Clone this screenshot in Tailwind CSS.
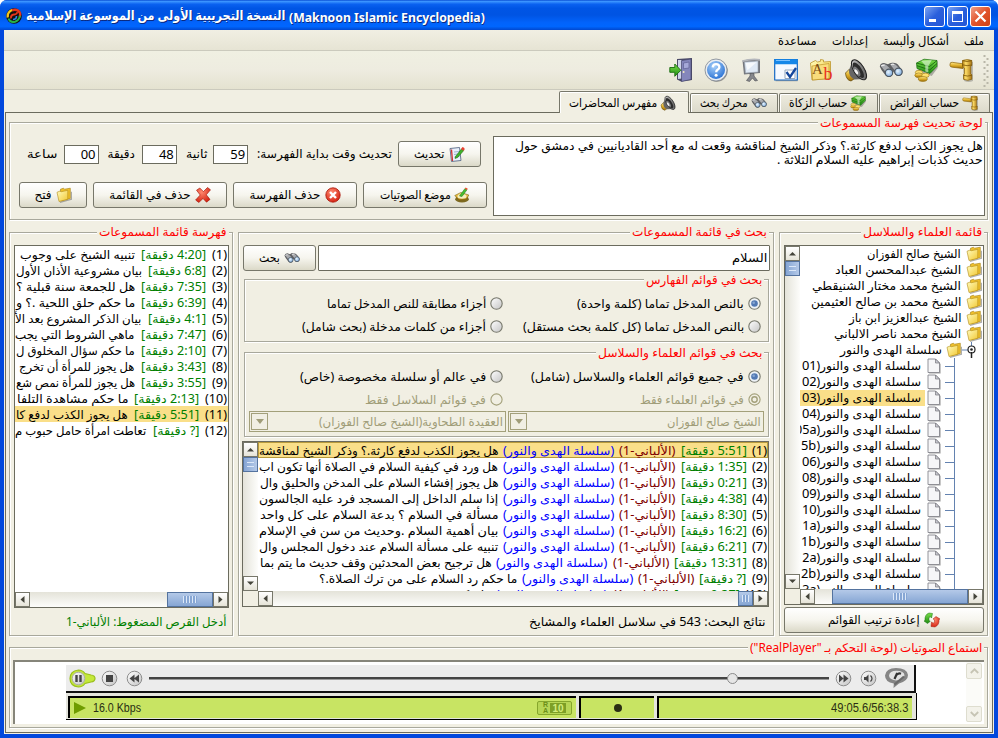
<!DOCTYPE html>
<html lang="ar">
<head>
<meta charset="utf-8">
<title>Maknoon Islamic Encyclopedia</title>
<script src="https://cdn.jsdelivr.net/npm/@tailwindcss/browser@4"></script>
</head>
<body class="w-[998px] h-[738px] overflow-hidden bg-white font-['Noto_Sans','DejaVu_Sans',sans-serif] text-[12px] leading-4 text-black">

<svg class="absolute w-0 h-0" width="0" height="0" xmlns="http://www.w3.org/2000/svg">
  <defs>
    <linearGradient id="gold" x1="0" y1="0" x2="0" y2="1"><stop offset="0" stop-color="#ffe98a"/><stop offset=".5" stop-color="#e0b02c"/><stop offset="1" stop-color="#9a6c08"/></linearGradient>
    <linearGradient id="goldH" x1="0" y1="0" x2="1" y2="0"><stop offset="0" stop-color="#b07c10"/><stop offset=".35" stop-color="#ffdf6a"/><stop offset="1" stop-color="#a87410"/></linearGradient>
    <linearGradient id="fold" x1="0" y1="0" x2="1" y2="1"><stop offset="0" stop-color="#fffcc0"/><stop offset="1" stop-color="#f2c832"/></linearGradient>
    <linearGradient id="grn" x1="0" y1="0" x2="0" y2="1"><stop offset="0" stop-color="#7be04a"/><stop offset="1" stop-color="#1f8a12"/></linearGradient>
    <linearGradient id="steel" x1="0" y1="0" x2="1" y2="1"><stop offset="0" stop-color="#e4e4e4"/><stop offset="1" stop-color="#4a4a4a"/></linearGradient>
    <radialGradient id="blu" cx=".4" cy=".3" r=".8"><stop offset="0" stop-color="#a8d0fa"/><stop offset="1" stop-color="#1f6ad0"/></radialGradient>
    <radialGradient id="lens" cx=".4" cy=".4" r=".7"><stop offset="0" stop-color="#eaf6ff"/><stop offset="1" stop-color="#6d9fd6"/></radialGradient>
    <radialGradient id="redg" cx=".4" cy=".3" r=".8"><stop offset="0" stop-color="#ff8a70"/><stop offset="1" stop-color="#d01808"/></radialGradient>
    <linearGradient id="ring" x1="0" y1="0" x2="1" y2="1"><stop offset="0" stop-color="#fff"/><stop offset="1" stop-color="#c4c4c4"/></linearGradient>
  </defs>
  <symbol id="gavel" viewBox="0 0 24 24">
    <path d="M13.500 3h10v19q-4.500 2-9 0z" fill="#444" opacity=".3" transform="translate(.6 1)"/>
    <path d="M1 6.300q0-2.300 2.200-2L14 5.800v4.700L3.200 9.200Q1 9 1 7.500z" fill="url(#gold)" stroke="#8a6208" stroke-width=".7"/>
    <path d="M13.500 2.500q4.700-1.800 9.300 0v5l-1 .8v7.500l1 1v4.500q-4 2-8.300 0v-4.500l.8-1V10l-1.800-1.700z" fill="url(#goldH)" stroke="#7c5706" stroke-width=".7"/>
    <path d="M13.500 6.800q4.500 1.700 9.300.2M14.500 17.300q4 1.500 8.300 0M13.500 2.700q4.500 1.600 9.300 0" fill="none" stroke="#7a5405" stroke-width=".8"/>
  </symbol>
  <symbol id="money" viewBox="0 0 24 24">
    <path d="M3 5l8-3.500 12 1V9l-6 8L4 12z" fill="#333" opacity=".35" transform="translate(.7 1)"/>
    <path d="M2.500 5L10 1.200l13 1.300v5.800L16 15.500 3 10.500z" fill="url(#grn)" stroke="#146a0c" stroke-width=".7"/>
    <path d="M2.500 5L15.500 8.500 23 2.500M3 7.700l12.700 4.300L23 5.500" fill="none" stroke="#125f0a" stroke-width=".8"/>
    <path d="M7 2.800l4.300 4.700v6l3 1V8.200l3.500-6.200z" fill="#f4fbf0" opacity=".55"/>
    <ellipse cx="5" cy="14.500" rx="3.700" ry="2.200" fill="#ffe070" stroke="#94700c" stroke-width=".6"/>
    <ellipse cx="4.800" cy="17.300" rx="4" ry="2.300" fill="url(#gold)" stroke="#94700c" stroke-width=".6"/>
    <ellipse cx="11.500" cy="17.300" rx="3.700" ry="2.200" fill="#ffe070" stroke="#94700c" stroke-width=".6"/>
    <ellipse cx="8.800" cy="21" rx="4.500" ry="2.400" fill="url(#gold)" stroke="#94700c" stroke-width=".6"/>
  </symbol>
  <symbol id="binoc" viewBox="0 0 24 24">
    <path d="M.8 8.500Q1 5.300 5 5l4 1.300q2-1.800 4.500-1.600Q18 4.500 20 8l3.200 4.500q.8 4.500-3 5.500-3.500.3-4.700-3l-1.500-1.500-1 4q-3 3-6.200.3L2.500 12z" fill="#5f6063"/>
    <path d="M1.500 7.500q2.500-2 5.500-.8L11.500 11 7 14.500zM11 6.300q3-1.300 5.500.2L20.500 10.500 15.500 12z" fill="#a9abaf"/>
    <path d="M2.200 8q2-1.200 3.500-.8M12 6.500q2-.7 3.300 0" stroke="#eee" stroke-width="1.200" fill="none"/>
    <circle cx="10" cy="14.800" r="3.700" fill="url(#lens)" stroke="#4c5660" stroke-width="1.100"/>
    <circle cx="19.500" cy="13.800" r="3.700" fill="url(#lens)" stroke="#4c5660" stroke-width="1.100"/>
  </symbol>
  <symbol id="spk" viewBox="0 0 24 24">
    <path d="M1.500 15l4-4 6 9-4.500 3q-5-1-5.500-8z" fill="url(#gold)" stroke="#5d4304" stroke-width=".7"/>
    <path d="M5 12L8.500 3q8 3 12 18l-10 .5q-6-3-5.500-9.500z" fill="#666"/>
    <ellipse cx="15" cy="11.800" rx="5.200" ry="11.400" transform="rotate(-33 15 11.800)" fill="url(#steel)" stroke="#222" stroke-width="1"/>
    <ellipse cx="14.300" cy="12.300" rx="3.500" ry="9" transform="rotate(-33 14.300 12.300)" fill="#2c2c2c"/>
    <ellipse cx="13" cy="13.300" rx="2.200" ry="5.500" transform="rotate(-33 13 13.300)" fill="#77787a"/>
    <ellipse cx="12.300" cy="13.800" rx="1.300" ry="3" transform="rotate(-33 12.300 13.800)" fill="#f2f2f2"/>
  </symbol>
  <symbol id="folder" viewBox="0 0 16 16">
    <path d="M3.500 14.500L15 11.500V4" fill="none" stroke="#777" stroke-width="1.200" opacity=".6" transform="translate(.4 .8)"/>
    <path d="M4.500 2.200l3-1 1 1 5.800-1v10.300L4.500 14z" fill="#eebf2c" stroke="#a37c0c" stroke-width=".6"/>
    <path d="M1 5.300l3-1.300 1 .8L11.800 3.300v9L3 14.500z" fill="url(#fold)" stroke="#b08a14" stroke-width=".6"/>
  </symbol>
  <symbol id="file" viewBox="0 0 16 16">
    <path d="M2.500 1.500h7.500l4 4v9.500h-11.500z" fill="#444" opacity=".5" transform="translate(.6 .6)"/>
    <path d="M2 1h7.500L13.500 5v9.500H2z" fill="#f6f6f8" stroke="#88888e" stroke-width=".9"/>
    <path d="M9.500 1v4h4z" fill="#c9c9d2" stroke="#77777c" stroke-width=".7"/>
  </symbol>
  <symbol id="edit" viewBox="0 0 16 16">
    <path d="M1 2.500l9.500-1L12 14.500 2.500 15.500z" fill="#e8f0fb" stroke="#5a6b88" stroke-width=".9"/>
    <path d="M2.500 3.500l1 11.500" stroke="#d03030" stroke-width="1.300"/><path d="M5 6l5-.5M5 8.500l4-.5M5.500 11l5-.5" stroke="#8fa6c8" stroke-width=".8"/>
    <path d="M6.500 10.500L12.500 3l2.200 1.600-6.200 7-2.500.8z" fill="#3eb428" stroke="#16660c" stroke-width=".6"/><path d="M12 3l1.500-2q2 .2 2.300 2.200l-1.500 1.500z" fill="#e84030"/>
  </symbol>
  <symbol id="place" viewBox="0 0 16 16">
    <ellipse cx="8" cy="12.200" rx="6.800" ry="3.300" fill="#7d6a20"/><path d="M.8 8.500l6-3 8 2.500-2.500 4.500-7 .8z" fill="url(#gold)" stroke="#7a6110" stroke-width=".6"/><ellipse cx="8" cy="9.500" rx="4.500" ry="2.200" fill="#f5efc0"/>
    <path d="M5.500 9L11 1.500l2 1.300L8 9.500z" fill="#45c030" stroke="#1b6d10" stroke-width=".5"/><path d="M10.800 1.700l.8-1.200 2.200 1.200-.8 1.200z" fill="#f05030"/>
  </symbol>
  <symbol id="stopx" viewBox="0 0 16 16"><circle cx="8" cy="8" r="7.200" fill="url(#redg)" stroke="#a81408" stroke-width=".8"/><path d="M5 5l6 6M11 5l-6 6" stroke="#fff" stroke-width="2.400"/></symbol>
  <symbol id="bigx" viewBox="0 0 16 16"><path d="M1.500 3.200L4.800 1l3.600 3.600L12.500.5 15.500 2.800l-4.200 5 3.700 4.600L11.500 15.200 8 11.500l-4.200 4L.6 13l4.600-5z" fill="url(#redg)" stroke="#9c1005" stroke-width=".6"/></symbol>
  <symbol id="cycle" viewBox="0 0 16 16">
    <path d="M1 8.500Q.5 2.500 5 1l3.500.5L7.500 6 6 4.500Q4.500 5.500 5 8.500l1.300.8L3.500 11.500 0 9z" fill="url(#grn)" stroke="#15700d" stroke-width=".5"/>
    <path d="M15 7.500q.5 5.500-4 7.500l-4-.5L7.500 10l1.800 1.300q1.700-1 1.200-3.500L9 7l3-2.500L16 7z" fill="url(#redg)" stroke="#a02010" stroke-width=".5"/>
  </symbol>
  <symbol id="radio" viewBox="0 0 13 13"><circle cx="6.500" cy="6.500" r="5.700" fill="url(#ring)" stroke="#77786c" stroke-width="1.100"/></symbol>
  <symbol id="radioOn" viewBox="0 0 13 13"><circle cx="6.500" cy="6.500" r="5.700" fill="#eef2f6" stroke="#77786c" stroke-width="1.100"/><circle cx="6.500" cy="6.500" r="3.300" fill="#5279b4"/><circle cx="5.700" cy="5.700" r="1.300" fill="#86a6d2"/></symbol>
  <symbol id="radioOff" viewBox="0 0 13 13"><circle cx="6.500" cy="6.500" r="5.600" fill="none" stroke="#a3a07a" stroke-width="1.100"/></symbol>
  <symbol id="radioOffOn" viewBox="0 0 13 13"><circle cx="6.500" cy="6.500" r="5.600" fill="none" stroke="#a3a07a" stroke-width="1.100"/><circle cx="6.500" cy="6.500" r="2.700" fill="none" stroke="#a3a07a" stroke-width="1.400"/></symbol>
</svg>

<div class="w-[998px] h-[738px] flex flex-col rounded-t-[7px] overflow-hidden bg-[#0148dd]">
  <!-- Title bar -->
  <header class="h-[30px] shrink-0 flex items-center pl-[6px] pr-[7px] bg-[linear-gradient(#0a4fd4_0,#3a93ff_5%,#0a61f0_14%,#0055e5_28%,#0054e3_50%,#0263fb_75%,#0066ff_88%,#0148cf_100%)]">
    <svg class="w-4 h-4 mr-1 mt-0.5" viewBox="0 0 16 16"><circle cx="8" cy="8" r="7.800" fill="#111"/><path d="M1.800 9.500Q1 4 6.500 1.800" fill="none" stroke="#f5c518" stroke-width="2.300"/><path d="M6 2.300q5-1.800 7.700 2.200 1 2.500-.3 4.500" fill="none" stroke="#e8351c" stroke-width="2.300"/><path d="M2.500 10.500q1.500 4.500 6.500 3.300 4-1.300 5-6" fill="none" stroke="#27b048" stroke-width="2"/><path d="M5 10.500Q4.500 7 8 6.500T11 4" fill="none" stroke="#e8351c" stroke-width="1.800"/><path d="M7 11.500q3.500 0 3.500-3.500" fill="none" stroke="#2d84e8" stroke-width="1.600"/></svg>
    <div class="flex items-center gap-1 font-bold text-white text-[13px] [text-shadow:1px_1px_0_#0b2a80]">
      <span dir="rtl" data-w="259">النسخة التجريبية الأولى من الموسوعة الإسلامية</span>
      <span class="pt-[3px]" data-w="196">(Maknoon Islamic Encyclopedia)</span>
    </div>
    <div class="ml-auto flex gap-[2px] pt-[3px]">
      <div class="w-[21px] h-[21px] rounded-[3px] border border-white bg-[linear-gradient(135deg,#7ba4f2,#2a5fdc_50%,#2456d6)] flex items-end pl-1 pb-1"><div class="w-[7px] h-[3px] bg-white"></div></div>
      <div class="w-[21px] h-[21px] rounded-[3px] border border-white bg-[linear-gradient(135deg,#7ba4f2,#2a5fdc_50%,#2456d6)] flex items-center justify-center"><div class="w-[11px] h-[11px] border border-t-[3px] border-white"></div></div>
      <div class="w-[21px] h-[21px] rounded-[3px] border border-white bg-[linear-gradient(135deg,#f0a088,#e2532c_50%,#cf4215)] flex items-center justify-center"><svg class="w-[13px] h-[13px]" viewBox="0 0 13 13"><path d="M1.500 1.500l10 10M11.500 1.500l-10 10" stroke="#fff" stroke-width="2.200"/></svg></div>
    </div>
  </header>

  <div dir="rtl" class="h-[704px] mx-1 bg-[#f1efe3] flex flex-col">
    <!-- Menu -->
    <nav class="h-[21px] shrink-0 border-b border-[#cbcabd] bg-[linear-gradient(#f1efe3,#e6e4d4)] flex items-center pr-[10px] pt-[2px]">
      <span data-w="20">ملف</span><span class="w-[15px]"></span><span data-w="66">أشكال وألبسة</span><span class="w-[15px]"></span><span data-w="36">إعدادات</span><span class="w-[15px]"></span><span data-w="39">مساعدة</span>
    </nav>
    <!-- Toolbar -->
    <div class="h-[39px] shrink-0 border-b border-[#cbcabd] bg-[linear-gradient(#f0f0e2,#eeece0_50%,#e4e2d0)] flex items-center pr-[5px] gap-[11px]">
      <svg class="w-[6px] h-[34px] -ml-[1px]" viewBox="0 0 6 34"><path d="M1.500 2v32" stroke="#b9b7a8" stroke-width="2" stroke-dasharray="2 4"/><path d="M4.500 5v28" stroke="#b9b7a8" stroke-width="2" stroke-dasharray="2 4"/></svg>
      <svg class="w-6 h-6"><use href="#gavel"/></svg>
      <svg class="w-6 h-6"><use href="#money"/></svg>
      <svg class="w-6 h-6"><use href="#binoc"/></svg>
      <svg class="w-6 h-6"><use href="#spk"/></svg>
      <svg class="w-6 h-6" viewBox="0 0 24 24"><path d="M1.500 5l5-2.500L8.500 4l3-.7V1.500l3 .5v2l7-.5v17L3 22z" fill="url(#fold)" stroke="#b58a1c" stroke-width=".7"/><path d="M3 8l17-2.500v15L3.500 22z" fill="#f8dc7c" stroke="#b58a1c" stroke-width=".6"/><text x="3" y="16" direction="ltr" font-family="Liberation Serif" font-size="15" fill="#7a4a12">A</text><text x="14.500" y="21.500" direction="ltr" font-family="Liberation Serif" font-size="18" fill="#e83020">b</text></svg>
      <svg class="w-6 h-6" viewBox="0 0 24 24"><path d="M1 2h22v20.500H1z" fill="#444" opacity=".4" transform="translate(.6 .8)"/><path d="M.7 1.500h22.600v20.500H.7z" fill="#f5f9ff" stroke="#1267c4" stroke-width="1.200"/><path d="M.5 1.300h23v5H.5z" fill="#1587e8"/><path d="M2 2.500h14" stroke="#7cc2ff"/><path d="M11 12h10v8.500H11z" fill="#fff" stroke="#93a6bb"/><path d="M12.500 14l3.500 5L22 10" fill="none" stroke="#14479c" stroke-width="2.300"/></svg>
      <svg class="w-6 h-6" viewBox="0 0 24 24"><path d="M3.500 2.500q9-2 17.500-1v13.500l-16 1.500z" fill="#74777d"/><path d="M5.500 4l13.500-1v11l-12.500 1z" fill="#dfe9f5" stroke="#9aa4b0" stroke-width=".6"/><path d="M6.500 5l11-.8-9 8z" fill="#fff" opacity=".7"/><path d="M3.500 3.200Q12 .6 21 1.800" stroke="#b4b7bc" stroke-width="1.800" fill="none"/><path d="M11 15.500h4v2.500l3.500 4.500-2.500.5-2.500-3-3 3.500-3-1 3.500-4.500z" fill="#85878c" stroke="#4b4d52" stroke-width=".6"/></svg>
      <svg class="w-6 h-6" viewBox="0 0 24 24"><circle cx="12.700" cy="12.800" r="11" fill="#555" opacity=".6"/><circle cx="12" cy="12" r="11" fill="#e9edf2" stroke="#7b848f" stroke-width=".8"/><circle cx="12" cy="12" r="9" fill="url(#blu)"/><path d="M8.700 9.300q.3-3.200 3.400-3.200t3.300 2.900q0 1.500-1.600 2.600-1.600 1-1.600 2.700" fill="none" stroke="#fff" stroke-width="2.300"/><circle cx="12.100" cy="17.300" r="1.500" fill="#fff"/></svg>
      <svg class="w-6 h-6" viewBox="0 0 24 24"><path d="M8 1l15-1v22l-11 1.500-4-2z" fill="#4c4b68"/><path d="M9 2h4v18.500l-4 .5z" fill="#cfd3ea"/><path d="M12.500 2.500L22 1v20.500l-9.500 2z" fill="#8486bb" stroke="#45466c" stroke-width=".7"/><path d="M14.500 5l5.500-1v6l-5.500.8z" fill="#a5a8d8" stroke="#5e6094" stroke-width=".7"/><circle cx="14.600" cy="14" r="1" fill="#f1e9c0"/><path d="M.8 9.500h5V6l6 6.300-6 6v-4h-5z" fill="url(#grn)" stroke="#176b0d" stroke-width=".9"/></svg>
    </div>
    <!-- Tabs -->
    <div class="h-[22px] shrink-0 flex items-end pr-1 gap-[1px]">
      <div class="w-[111px] h-[19px] border border-b-0 border-[#77776a] rounded-t-[2px] bg-[linear-gradient(#eeecdf,#dcdacb)] flex items-center pr-[11px] gap-[3px] shadow-[inset_1px_1px_0_#fff]"><svg class="w-4 h-4"><use href="#gavel"/></svg><span data-w="69">حساب الفرائض</span></div>
      <div class="w-[99px] h-[19px] border border-b-0 border-[#77776a] rounded-t-[2px] bg-[linear-gradient(#eeecdf,#dcdacb)] flex items-center pr-[11px] gap-[3px] shadow-[inset_1px_1px_0_#fff]"><svg class="w-4 h-4"><use href="#money"/></svg><span data-w="58">حساب الزكاة</span></div>
      <div class="w-[88px] h-[19px] border border-b-0 border-[#77776a] rounded-t-[2px] bg-[linear-gradient(#eeecdf,#dcdacb)] flex items-center pr-[10px] gap-[3px] shadow-[inset_1px_1px_0_#fff]"><svg class="w-4 h-4"><use href="#binoc"/></svg><span data-w="48">محرك بحث</span></div>
      <div class="relative z-10 w-[130px] h-[22px] -mb-px border border-b-0 border-[#77776a] rounded-t-[2px] bg-[#f1efe3] flex items-center pr-[12px] gap-[3px] shadow-[inset_1px_1px_0_#fff]"><svg class="w-4 h-4"><use href="#spk"/></svg><span data-w="88">مفهرس المحاضرات</span></div>
    </div>

    <main class="h-[621px] mx-[1px] border border-[#6b6b5e] pt-[9px] pr-[4px] pl-[3px] flex flex-col">
      <!-- Index editing -->
      <section class="relative h-[98px] shrink-0 border border-[#a8a89c] shadow-[inset_1px_1px_0_#fff,1px_1px_0_#fff] flex pt-[13px] pr-[2px]">
        <h2 class="absolute -top-[8px] right-[2px] px-[2px] bg-[#f1efe3] text-[#f00] leading-4"><span data-w="163">لوحة تحديث فهرسة المسموعات</span></h2>
        <div class="w-[492px] h-[80px] border-[1.500px] border-[#6b6b5e] bg-white pr-[1px] pt-[1px] leading-[15px] flex flex-col items-start">
          <span data-w="468">هل يجوز الكذب لدفع كارثة.؟ وذكر الشيخ لمناقشة وقعت له مع أحد القاديانيين في دمشق حول</span>
          <span class="-mt-px" data-w="206">حديث كذبات إبراهيم عليه السلام الثلاثة .</span>
        </div>
        <div class="pt-[5px] pr-[6px] flex flex-col gap-[15px]">
          <div class="flex items-center h-[26px] pr-[6px]">
            <div class="w-[83px] h-[26px] rounded-[3px] border border-[#77776a] bg-[linear-gradient(#fff,#f6f5ee_50%,#dbd9c8)] flex items-center justify-center gap-[5px]"><svg class="w-4 h-4"><use href="#edit"/></svg><span data-w="31">تحديث</span></div>
            <span class="mr-[6px]" data-w="135">تحديث وقت بداية الفهرسة:</span>
            <div class="mr-[9px] w-[35px] h-[19px] border-[1.500px] border-[#6b6b5e] bg-white flex items-center justify-start pr-[2px] text-[13px]"><span data-w="15">59</span></div>
            <span class="mr-[6px]" data-w="21">ثانية</span>
            <div class="mr-[9px] w-[35px] h-[19px] border-[1.500px] border-[#6b6b5e] bg-white flex items-center justify-start pr-[2px] text-[13px]"><span data-w="15">48</span></div>
            <span class="mr-[7px]" data-w="27">دقيقة</span>
            <div class="mr-[9px] w-[35px] h-[19px] border-[1.500px] border-[#6b6b5e] bg-white flex items-center justify-start pr-[2px] text-[13px]"><span data-w="15">00</span></div>
            <span class="mr-[6px]" data-w="30">ساعة</span>
          </div>
          <div class="flex items-center h-[26px] gap-[6px]">
            <div class="w-[124px] h-[26px] rounded-[3px] border border-[#77776a] bg-[linear-gradient(#fff,#f6f5ee_50%,#dbd9c8)] flex items-center justify-center gap-[4px]"><svg class="w-4 h-4"><use href="#place"/></svg><span data-w="71">موضع الصوتيات</span></div>
            <div class="w-[124px] h-[26px] rounded-[3px] border border-[#77776a] bg-[linear-gradient(#fff,#f6f5ee_50%,#dbd9c8)] flex items-center justify-center gap-[4px]"><svg class="w-4 h-4"><use href="#stopx"/></svg><span data-w="71">حذف الفهرسة</span></div>
            <div class="w-[134px] h-[26px] rounded-[3px] border border-[#77776a] bg-[linear-gradient(#fff,#f6f5ee_50%,#dbd9c8)] flex items-center justify-center gap-[4px]"><svg class="w-4 h-4"><use href="#bigx"/></svg><span data-w="82">حذف في القائمة</span></div>
            <div class="w-[68px] h-[26px] rounded-[3px] border border-[#77776a] bg-[linear-gradient(#fff,#f6f5ee_50%,#dbd9c8)] flex items-center justify-center gap-[4px]"><svg class="w-4 h-4"><use href="#folder"/></svg><span data-w="17">فتح</span></div>
          </div>
        </div>
      </section>

      <div class="h-[404px] mt-[12px] shrink-0 flex">
        <!-- Scholars tree -->
        <section class="relative w-[209px] border border-[#a8a89c] shadow-[inset_1px_1px_0_#fff,1px_1px_0_#fff] pt-[12px] px-[3px] pl-[4px]">
          <h2 class="absolute -top-[9px] right-[3px] px-[2px] bg-[#f1efe3] text-[#f00]"><span data-w="119">قائمة العلماء والسلاسل</span></h2>
          <div class="w-[200px] h-[360px] border-[1.500px] border-[#6b6b5e] bg-[#f1efe3] grid grid-cols-[183px_15px] grid-rows-[343px_15px]">
            <div id="tree" class="relative bg-white overflow-hidden flex flex-col"></div>
            <div data-vbar="15"></div>
            <div data-hbar="136"></div>
          </div>
          <div class="mt-[2px] w-[200px] h-[26px] rounded-[3px] border border-[#77776a] bg-[linear-gradient(#fff,#f6f5ee_50%,#dbd9c8)] flex items-center justify-center gap-[4px]"><svg class="w-4 h-4"><use href="#cycle"/></svg><span data-w="92">إعادة ترتيب القوائم</span></div>
        </section>

        <!-- Search -->
        <section class="relative mr-[5px] w-[536px] border border-[#a8a89c] shadow-[inset_1px_1px_0_#fff,1px_1px_0_#fff] pt-[12px] pr-[3px] pl-[4px] flex flex-col">
          <h2 class="absolute -top-[9px] right-[4px] px-[2px] bg-[#f1efe3] text-[#f00]"><span data-w="135">بحث في قائمة المسموعات</span></h2>
          <div class="flex gap-[2px] h-[26px] shrink-0">
            <div class="w-[453px] border-[1.500px] border-[#6b6b5e] rounded-[1px] bg-white flex items-center pr-[2px]"><span data-w="35">السلام</span></div>
            <div class="w-[73px] rounded-[3px] border border-[#77776a] bg-[linear-gradient(#fff,#f6f5ee_50%,#dbd9c8)] flex items-center justify-center gap-[5px]"><svg class="w-4 h-4"><use href="#binoc"/></svg><span data-w="21">بحث</span></div>
          </div>
          <div class="relative mt-[8px] mr-[1px] w-[525px] h-[63px] shrink-0 border border-[#a8a89c] shadow-[inset_1px_1px_0_#fff,1px_1px_0_#fff] grid grid-cols-[258px_260px] auto-rows-[23px] pt-[12px] pr-[7px]">
            <h2 class="absolute -top-[8px] right-[4px] px-[2px] bg-[#f1efe3] text-[#f00]"><span data-w="116">بحث في قوائم الفهارس</span></h2>
            <div class="flex items-center gap-[4px]"><svg class="w-[13px] h-[13px]"><use href="#radioOn"/></svg><span data-w="167">بالنص المدخل تماما (كلمة واحدة)</span></div>
            <div class="flex items-center gap-[4px]"><svg class="w-[13px] h-[13px]"><use href="#radio"/></svg><span data-w="159">أجزاء مطابقة للنص المدخل تماما</span></div>
            <div class="flex items-center gap-[4px]"><svg class="w-[13px] h-[13px]"><use href="#radio"/></svg><span data-w="221">بالنص المدخل تماما (كل كلمة بحث مستقل)</span></div>
            <div class="flex items-center gap-[4px]"><svg class="w-[13px] h-[13px]"><use href="#radio"/></svg><span data-w="184">أجزاء من كلمات مدخلة (بحث شامل)</span></div>
          </div>
          <div class="relative mt-[10px] mr-[1px] w-[525px] h-[85px] shrink-0 border border-[#a8a89c] shadow-[inset_1px_1px_0_#fff,1px_1px_0_#fff] pt-[12px] pr-[4px]">
            <h2 class="absolute -top-[8px] right-[4px] px-[2px] bg-[#f1efe3] text-[#f00]"><span data-w="164">بحث في قوائم العلماء والسلاسل</span></h2>
            <div class="grid grid-cols-[258px_258px] auto-rows-[23px] pr-[3px]">
              <div class="flex items-center gap-[4px]"><svg class="w-[13px] h-[13px]"><use href="#radioOn"/></svg><span data-w="213">في جميع قوائم العلماء والسلاسل (شامل)</span></div>
              <div class="flex items-center gap-[4px]"><svg class="w-[13px] h-[13px]"><use href="#radio"/></svg><span data-w="186">في عالم أو سلسلة مخصوصة (خاص)</span></div>
              <div class="flex items-center gap-[4px] text-[#a09d78]"><svg class="w-[13px] h-[13px]"><use href="#radioOffOn"/></svg><span data-w="104">في قوائم العلماء فقط</span></div>
              <div class="flex items-center gap-[4px] text-[#a09d78]"><svg class="w-[13px] h-[13px]"><use href="#radioOff"/></svg><span data-w="121">في قوائم السلاسل فقط</span></div>
            </div>
            <div class="flex gap-[2px] text-[#a09d78]">
              <div class="w-[256px] h-[21px] border border-[#a3a07a] flex items-center justify-between pr-[2px] pl-[1px]"><span data-w="94">الشيخ صالح الفوزان</span><div class="w-[17px] h-[17px] border border-[#a3a07a] flex items-center justify-center"><svg class="w-[8px] h-[5px]" viewBox="0 0 8 5"><path d="M0 0h8L4 5z" fill="#a09d78"/></svg></div></div>
              <div class="w-[257px] h-[21px] border border-[#a3a07a] flex items-center justify-between pr-[2px] pl-[1px]"><span data-w="184">العقيدة الطحاوية(الشيخ صالح الفوزان)</span><div class="w-[17px] h-[17px] border border-[#a3a07a] flex items-center justify-center"><svg class="w-[8px] h-[5px]" viewBox="0 0 8 5"><path d="M0 0h8L4 5z" fill="#a09d78"/></svg></div></div>
            </div>
          </div>
          <div class="mt-[4px] mr-[1px] w-[527px] h-[166px] shrink-0 border-[1.500px] border-[#6b6b5e] bg-[#f1efe3] grid grid-cols-[510px_15px] grid-rows-[149px_15px]">
            <div id="results" class="bg-white overflow-hidden flex flex-col"></div>
            <div data-vbar="15"></div>
            <div data-hbar="15"></div>
          </div>
          <div class="pt-[7px] pr-[4px]"><span data-w="237">نتائج البحث: 543 في سلاسل العلماء والمشايخ</span></div>
        </section>

        <!-- Tape index -->
        <section class="relative mr-[5px] w-[224px] border border-[#a8a89c] shadow-[inset_1px_1px_0_#fff,1px_1px_0_#fff] pt-[12px] pr-[3px] pl-[4px]">
          <h2 class="absolute -top-[9px] right-[3px] px-[2px] bg-[#f1efe3] text-[#f00]"><span data-w="128">فهرسة قائمة المسموعات</span></h2>
          <div class="w-[215px] h-[363px] border-[1.500px] border-[#6b6b5e] bg-white grid grid-rows-[346px_15px]">
            <div id="tape" class="overflow-hidden flex flex-col"></div>
            <div data-hbar="46"></div>
          </div>
          <div class="pt-[6px] pr-[2px] text-[#008000]"><span data-w="161">أدخل القرص المضغوط: الألباني-1</span></div>
        </section>
      </div>

      <!-- Player -->
      <section class="relative mt-[11px] h-[81px] shrink-0 border border-[#a8a89c] shadow-[inset_1px_1px_0_#fff,1px_1px_0_#fff] pt-[12px] pl-[3px] pr-[3px]">
        <h2 class="absolute -top-[8px] right-[3px] px-[2px] bg-[#f1efe3] text-[#f00]"><span data-w="232">استماع الصوتيات (لوحة التحكم بـ "RealPlayer")</span></h2>
        <div dir="ltr" class="h-[64px] w-[971px] border-t-2 border-l-2 border-[#86857a] bg-white flex">
          <div class="ml-[51px] mt-[3px] w-[851px] h-[55px] border-b border-black">
            <div class="w-[850px] h-[28px] border-r-2 border-b-2 border-[#111] bg-[#ececec] flex items-center pl-[3px] pr-[5px]">
              <svg class="w-[27px] h-[19px]" viewBox="0 0 27 19"><path d="M9.500 1q4 0 6.500 3.500l6 1.500q4 .5 4 3.500t-4 3.500l-6 1.500Q13.500 18 9.500 18 1 17 1 9.500T9.500 1z" fill="#c4e83a" stroke="#9abf1c" stroke-width="1.200"/><circle cx="9.500" cy="9.500" r="6.300" fill="url(#ring)" stroke="#aaa"/><path d="M7.500 6v7M11.500 6v7" stroke="#444" stroke-width="2.400"/></svg>
              <svg class="ml-[5px] w-[17px] h-[17px]" viewBox="0 0 17 17"><circle cx="8.500" cy="8.500" r="7.300" fill="url(#ring)" stroke="#8c8c8c"/><path d="M5 5h7v7H5z" fill="#444"/></svg>
              <svg class="ml-[8px] w-[17px] h-[17px]" viewBox="0 0 17 17"><circle cx="8.500" cy="8.500" r="7.300" fill="url(#ring)" stroke="#8c8c8c"/><path d="M8.500 4.500v8L3.500 8.500zM13 4.500v8L8 8.500z" fill="#444"/></svg>
              <div class="ml-[6px] relative w-[680px] h-[3px] bg-[#444] border-b border-[#999]"><div class="absolute left-[578px] -top-[4px] w-[11px] h-[11px] rounded-full border border-[#8a8a8a] bg-[#e6e6e6]"></div></div>
              <svg class="ml-[6px] w-[17px] h-[17px]" viewBox="0 0 17 17"><circle cx="8.500" cy="8.500" r="7.300" fill="url(#ring)" stroke="#8c8c8c"/><path d="M4 4.500v8l4.500-4zM8.500 4.500v8l5-4z" fill="#444"/></svg>
              <svg class="ml-[8px] w-[17px] h-[17px]" viewBox="0 0 17 17"><circle cx="8.500" cy="8.500" r="7.300" fill="url(#ring)" stroke="#8c8c8c"/><path d="M4 7h2l2.500-2.500v8L6 10H4z" fill="#444"/><path d="M10.500 5.500q3 3 0 6" fill="none" stroke="#444" stroke-width="1.200"/></svg>
              <svg class="ml-[7px] w-[25px] h-[22px] shrink-0" viewBox="0 0 25 22"><path d="M12 1q11 0 12 7 0 6-9 8.500L9.500 21l.3-4.500Q1 15 1 8.500 2 1 12 1z" fill="#858585"/><path d="M12.500 3.800q7.500 0 8 4.500-.5 4-8.500 5.200Q5 12.500 5 8.500q.5-4.700 7.500-4.700z" fill="#e2e2e2"/><path d="M10.500 12l2.700-6M12 8.500q2-3 5-1.800" fill="none" stroke="#333" stroke-width="2.200"/><path d="M10.500 17.500l9.500-8" stroke="#6a6a6a" stroke-width="2.200"/></svg>
            </div>
            <div class="h-[26px] border-r border-black bg-[#e4e4dc] pt-[3px] pb-[1px] pl-[2px] pr-[4px] flex gap-[3px] font-['Liberation_Sans',sans-serif] text-[12px] text-[#2a2e14]">
              <div class="w-[508px] border-t-2 border-l-2 border-black bg-[#c8e463] flex items-center pl-[4px]">
                <svg class="w-[12px] h-[12px]" viewBox="0 0 12 12"><path d="M0 0l12 6-12 6z" fill="#6f9c00"/></svg>
                <span class="ml-[7px]" data-w="48">16.0 Kbps</span>
                <div class="ml-auto mr-[4px] w-[35px] h-[14px] border border-[#86a62c] bg-[#b7d655] rounded-[2px] flex items-center justify-center gap-[2px] text-[#6c8f18] font-bold"><span class="flex flex-col text-[7px] leading-[6px]"><span>R</span><span>A</span></span><span class="w-[16px] h-[10px] bg-[#7d9f26] text-[#d3ec7c] text-[10px] leading-[11px] text-center">10</span></div>
              </div>
              <div class="w-[75px] border-t-2 border-l-2 border-black bg-[#c8e463] flex items-center justify-center"><div class="w-2 h-2 rounded-full bg-[#2a2e14]"></div></div>
              <div class="flex-1 border-t-2 border-l-2 border-black bg-[#c8e463] flex items-center pl-[172px]"><span data-w="77">49:05.6/56:38.3</span></div>
            </div>
          </div>
          <div class="ml-auto mr-[2px] w-[16px] h-[60px] bg-[#fbfbf8] flex flex-col justify-between">
            <div class="h-[16px] mt-px rounded-[2px] border border-[#deddcf] bg-[#f3f2ea] flex items-center justify-center"><svg class="w-[9px] h-[6px]" viewBox="0 0 9 6"><path d="M.8 5l3.700-3.700L8.200 5" fill="none" stroke="#c6c4b4" stroke-width="1.800"/></svg></div>
            <div class="h-[16px] rounded-[2px] border border-[#deddcf] bg-[#f3f2ea] flex items-center justify-center"><svg class="w-[9px] h-[6px]" viewBox="0 0 9 6"><path d="M.8 1l3.700 3.700L8.200 1" fill="none" stroke="#c6c4b4" stroke-width="1.800"/></svg></div>
          </div>
        </div>
      </section>
    </main>
  </div>
</div>

<script>
const seg = (t, w, c = '') => `<span class="${c}" data-w="${w}">${t}</span>`;

// [duration, duration width, text, text width]
const tape = [
  ['4:20', 65, 'تنبيه الشيخ على وجوب', 115], ['6:8', 58, 'بيان مشروعية الأذان الأول', 126],
  ['7:35', 65, 'هل للجمعة سنة قبلية ؟', 119], ['6:39', 65, 'ما حكم حلق اللحية .؟ و', 119],
  ['4:1', 58, 'بيان الذكر المشروع بعد الأ', 126], ['7:47', 65, 'ماهي الشروط التي يجب', 119],
  ['2:10', 65, 'ما حكم سؤال المخلوق ل', 119], ['3:43', 65, 'هل يجوز للمرأة أن تخرج', 115],
  ['3:55', 65, 'هل يجوز للمرأة نمص شع', 119], ['2:13', 65, 'ما حكم مشاهدة التلفا', 112],
  ['5:51', 65, 'هل يجوز الكذب لدفع كا', 112], ['?', 46, 'تعاطت امرأة حامل حبوب م', 131]];
document.getElementById('tape').innerHTML = tape.map((r, i) =>
  `<div class="h-4 shrink-0 flex items-center gap-[6px] pr-[1px] pt-px whitespace-nowrap ${i === 10 ? 'bg-[#fadf89]' : ''}">`
  + seg(`(${i + 1})`, i > 8 ? 22 : 15) + seg(`[${r[0]} دقيقة]`, r[1], 'text-[#008000]') + seg(r[2], r[3]) + '</div>').join('');

const results = [
  ['5:51', 66, 'هل يجوز الكذب لدفع كارثة.؟ وذكر الشيخ لمناقشة', 239], ['1:35', 66, 'هل ورد في كيفية السلام في الصلاة أنها تكون اب', 239],
  ['0:21', 66, 'هل يجوز إفشاء السلام على المدخن والحليق وال', 239], ['4:38', 66, 'إذا سلم الداخل إلى المسجد فرد عليه الجالسون', 239],
  ['8:30', 66, 'مسألة في السلام ؟ بدعة السلام على كل واحد', 239], ['16:2', 66, 'بيان أهمية السلام .وحديث من سن في الإسلام', 239],
  ['6:21', 66, 'تنبيه على مسألة السلام عند دخول المجلس وال', 239], ['13:31', 73, 'هل ترجيح بعض المحدثين وقف حديث ما يتم بما', 232],
  ['?', 47, 'ما حكم رد السلام على من ترك الصلاة.؟', 198], ['0:37', 66, 'ما حكم', 36]];
document.getElementById('results').innerHTML = results.map((r, i) =>
  `<div class="h-4 shrink-0 flex items-center gap-[5px] pr-[1px] pt-px whitespace-nowrap ${i === 0 ? 'bg-[#fadf89] outline outline-1 -outline-offset-1 outline-[#b89a3c]' : ''}">`
  + seg(`(${i + 1})`, i > 8 ? 22 : 15) + seg(`[${r[0]} دقيقة]`, r[1], 'text-[#008000]')
  + seg('(الألباني-1)', 56, 'text-[#800000]') + seg('(سلسلة الهدى والنور)', 111, 'text-[#00f]') + seg(r[2], r[3]) + '</div>').join('');

const scholars = [['الشيخ صالح الفوزان', 94], ['الشيخ عبدالمحسن العباد', 126], ['الشيخ محمد مختار الشنيقطي', 149],
  ['الشيخ محمد بن صالح العثيمين', 150], ['الشيخ عبدالعزيز ابن باز', 112], ['الشيخ محمد ناصر الالباني', 127]];
const parts = ['01', '02', '03', '04', '05a', '5b', '06', '08', '09', '10', '11a', '1b', '12a', '2b', '13a'];
document.getElementById('tree').innerHTML =
  scholars.map(s => `<div class="h-4 shrink-0 flex items-center gap-[5px] pr-[1px]"><svg class="w-4 h-4 shrink-0"><use href="#folder"/></svg>${seg(s[0], s[1])}</div>`).join('')
  + `<div class="h-4 shrink-0 flex items-center pr-[5px]"><svg class="w-[16px] h-4 shrink-0" viewBox="0 0 16 16"><path d="M9.500 0v4M0 8h6" stroke="#6382b0"/><circle cx="9.500" cy="7.500" r="3.500" fill="#fff" stroke="#222" stroke-width="1.200"/><circle cx="9.500" cy="7.500" r="1.300" fill="#222"/><path d="M9.500 10v6" stroke="#222" stroke-width="1.500"/></svg><svg class="w-4 h-4 shrink-0 ml-[4px]"><use href="#folder"/></svg>${seg('سلسلة الهدى والنور', 102)}</div>`
  + parts.map((p, i) => `<div class="h-4 shrink-0 flex items-center pr-[28px]"><div class="w-[10px] h-4 shrink-0 border-r border-[#6382b0] flex items-center"><div class="w-full h-px bg-[#6382b0]"></div></div><svg class="w-4 h-4 shrink-0 mr-[3px]"><use href="#file"/></svg><div class="mr-[1px] pr-[4px] h-4 flex items-center grow ${i === 2 ? 'bg-[#fadf89]' : ''}">${seg('سلسلة الهدى والنور', 101)}${seg('(', 4)}${seg(p, p.length > 2 ? 21 : 15)}</div></div>`).join('');

const box = 'shrink-0 w-[15px] h-[15px] border border-[#77776a] bg-[linear-gradient(#fff,#e6e4d8)] flex items-center justify-center';
const arrow = d => `<div class="${box}"><svg class="w-[7px] h-[7px]" viewBox="0 0 7 7"><path d="${d}" fill="#44443a"/></svg></div>`;
document.querySelectorAll('[data-vbar]').forEach(e => {
  e.className = 'flex flex-col bg-[linear-gradient(90deg,#e4e3d9,#fdfdfb)]';
  e.innerHTML = arrow('M0 5.500h7L3.500 2z') + '<div class="h-[15px] border border-[#54739f] bg-[linear-gradient(90deg,#86a6d4,#b4c9e8)] flex flex-col items-center justify-center gap-[3px]"><div class="w-[7px] h-px bg-[#dce8f8]"></div><div class="w-[7px] h-px bg-[#dce8f8]"></div></div><div class="grow"></div>' + arrow('M0 1.500h7L3.500 5z');
});
document.querySelectorAll('[data-hbar]').forEach(e => {
  const w = e.dataset.hbar;
  e.className = 'flex min-w-0 h-[15px] bg-[linear-gradient(#e4e3d9,#fdfdfb)]';
  e.innerHTML = arrow('M1.500 0v7L5.500 3.500z') + `<div class="h-[15px] border border-[#54739f] bg-[linear-gradient(#b4c9e8,#86a6d4)] flex items-center justify-center" style="width:${w}px"><div class="max-w-[7px] w-full h-[7px] bg-[repeating-linear-gradient(90deg,#dce8f8_0,#dce8f8_1px,#86a6d4_1px,#86a6d4_3px)] ${w > 20 ? 'min-w-[14px]' : ''}"></div></div><div class="grow"></div>` + arrow('M5.500 0v7L1.500 3.500z');
});

function fit(e) {
  const n = e.offsetWidth, w = +e.dataset.w;
  if (!n) return;
  const rtl = getComputedStyle(e.parentElement).direction === 'rtl';
  e.style.transformOrigin = rtl ? 'right' : 'left';
  e.style.transform = `scaleX(${w / n})`;
  e.style[rtl ? 'marginLeft' : 'marginRight'] = (w - n) + 'px';
}
const watcher = new ResizeObserver(list => list.forEach(x => fit(x.target)));
document.querySelectorAll('[data-w]').forEach(e => {
  e.classList.add('inline-block', 'whitespace-nowrap', 'shrink-0');
  e.style.width = 'max-content';
  watcher.observe(e);
});
addEventListener('load', () => document.querySelectorAll('[data-w]').forEach(fit));
</script>
</body>
</html>
